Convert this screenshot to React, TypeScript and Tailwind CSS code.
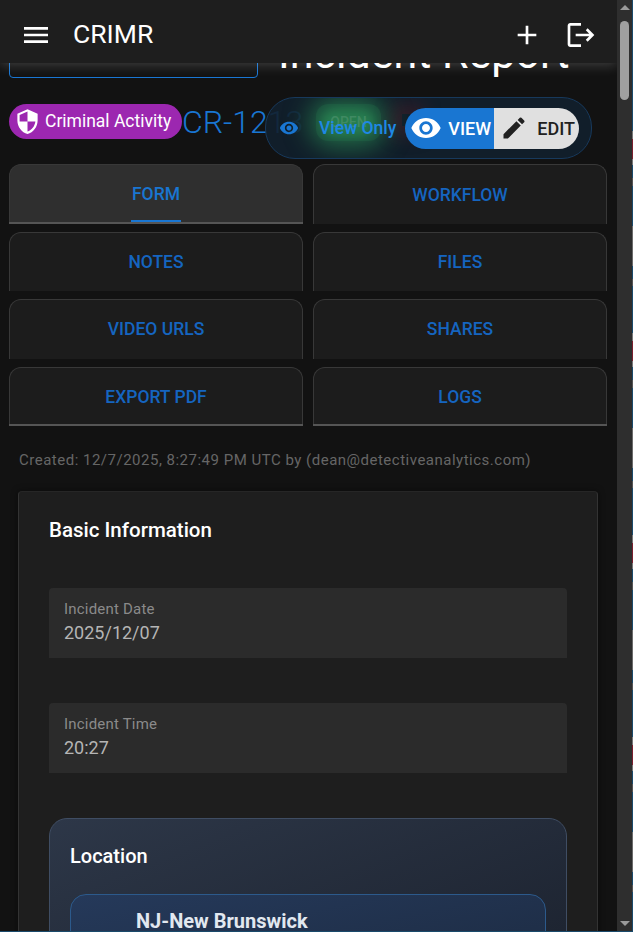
import React from 'react';

const ICONS = {
  menu: 'M3 18h18v-2H3v2zm0-5h18v-2H3v2zm0-7v2h18V6H3z',
  add: 'M19 13h-6v6h-2v-6H5v-2h6V5h2v6h6v2z',
  logout: 'M17 7l-1.41 1.41L18.17 11H8v2h10.17l-2.58 2.58L17 17l5-5zM4 5h8V3H4c-1.1 0-2 .9-2 2v14c0 1.1.9 2 2 2h8v-2H4V5z',
  shield: 'M12 1 3 5v6c0 5.55 3.84 10.74 9 12 5.16-1.26 9-6.45 9-12V5l-9-4zm0 10.99h7c-.53 4.12-3.28 7.79-7 8.94V12H5V6.3l7-3.11v8.8z',
  eye: 'M12 4.5C7 4.5 2.73 7.61 1 12c1.73 4.39 6 7.5 11 7.5s9.27-3.11 11-7.5c-1.73-4.39-6-7.5-11-7.5zM12 17c-2.76 0-5-2.24-5-5s2.24-5 5-5 5 2.24 5 5-2.24 5-5 5zm0-8c-1.66 0-3 1.34-3 3s1.34 3 3 3 3-1.34 3-3-1.34-3-3-3z',
  edit: 'M3 17.25V21h3.75L17.81 9.94l-3.75-3.75L3 17.25zM20.71 7.04c.39-.39.39-1.02 0-1.41l-2.34-2.34a.9959.9959 0 0 0-1.41 0l-1.83 1.83 3.75 3.75 1.83-1.83z',
};

const Icon = ({ name, className }: { name: keyof typeof ICONS; className: string }) => (
  <svg viewBox="0 0 24 24" fill="currentColor" className={className}>
    <path d={ICONS[name]} />
  </svg>
);

const TABS = ['FORM', 'WORKFLOW', 'NOTES', 'FILES', 'VIDEO URLS', 'SHARES', 'EXPORT PDF', 'LOGS'];

// scroll markers of the page behind, one period of the 1px strip at the window edge
const MARKS = [
  { h: 131, c: '#1a4a6b' }, { h: 8, c: '#777777' }, { h: 20, c: '#7a1f2e' }, { h: 6, c: '#777777' },
  { h: 13, c: '#1a4a6b' }, { h: 8, c: '#555555' }, { h: 40, c: '#1a4a6b' }, { h: 40, c: '#6a6a6a' },
  { h: 13, c: '#1a4a6b' }, { h: 7, c: '#555555' }, { h: 47, c: '#1a4a6b' },
];

const Field = ({ label, value }: { label: string; value: string }) => (
  <div className="h-[70px] rounded-t bg-[#2b2b2b] px-[15px] pt-[11px]">
    <div className="text-[15px] leading-[20px] tracking-[0.2px] text-[#8a8a8a]">{label}</div>
    <div className="mt-[2px] text-[18px] leading-[24px] text-[#b5b5b5]">{value}</div>
  </div>
);

export default function App() {
  return (
    <div className="flex h-[932px] w-[633px] overflow-hidden border-b border-[#1a4a6b] bg-[#121212] font-['Roboto',sans-serif]">
      <div className="relative w-[617px] shrink-0 overflow-hidden">
        {/* App bar sits over the scrolled page */}
        <header className="absolute inset-x-0 top-0 z-30 flex h-[63px] items-center bg-[#1e1e1e] pl-[20px] pr-[20px] pt-[6px] text-white shadow-[0_2px_12px_rgba(255,255,255,0.2)]">
          <Icon name="menu" className="size-8" />
          <span className="ml-[21px] text-[26.5px] leading-none">CRIMR</span>
          <div className="ml-auto flex items-center gap-[22px]">
            <Icon name="add" className="size-8" />
            <Icon name="logout" className="size-8" />
          </div>
        </header>

        <div className="px-[9px]">
          <div className="flex h-[78px] items-end">
            <div className="h-[40px] w-[249px] rounded-b border border-[#1976d2]" />
            <h1 className="ml-[20px] pb-[1px] text-[43px] leading-[48px] text-white">Incident Report</h1>
          </div>

          <div className="mt-[26px] flex h-[35px] items-center">
            <div className="flex h-[35px] w-[173px] shrink-0 items-center rounded-full bg-[#9c27b0] pl-[5px] text-white">
              <Icon name="shield" className="size-[27px]" />
              <span className="ml-[4px] text-[17.5px]">Criminal Activity</span>
            </div>
            <span className="text-[32px] font-light leading-none text-[#1976d2]">CR-1213</span>
          </div>

          <div className="mt-[25px] grid grid-cols-2 gap-x-[10px] gap-y-[8px] pr-[1px]">
            {TABS.map((tab, i) => {
              const active = i === 0;
              const lined = active || i >= 6;
              return (
                <div
                  key={tab}
                  className={`relative flex h-[59.5px] items-center justify-center rounded-t-xl border border-b-0 border-[#383838] text-[17.5px] font-medium ${
                    active ? 'bg-[#2f2f2f] text-[#1976d2]' : 'bg-[#1c1c1c] text-[#1565c0]'
                  } ${i === 1 ? 'pt-[1px]' : ''}`}
                >
                  {tab}
                  {lined && <span className="absolute inset-x-[-1px] bottom-0 h-[2px] bg-[#555555]" />}
                  {active && <span className="absolute bottom-[2px] left-1/2 h-[2px] w-[50px] -translate-x-1/2 bg-[#1976d2]" />}
                </div>
              );
            })}
          </div>

          <p className="mt-[24px] pl-[10px] text-[15px] leading-[20px] tracking-[0.5px] text-[#666666]">
            Created: 12/7/2025, 8:27:49 PM UTC by (dean@detectiveanalytics.com)
          </p>
        </div>

        <section className="ml-[18px] mt-[21px] w-[580px] rounded-t border-x border-t border-x-[#333333] border-t-[#262626] bg-[#1e1e1e] px-[30px] pt-[25px] shadow-[0_0_6px_rgba(0,0,0,0.5)]">
          <h2 className="text-[20.5px] font-medium leading-[26px] text-white">Basic Information</h2>
          <div className="mt-[45px] flex flex-col gap-[45px]">
            <Field label="Incident Date" value="2025/12/07" />
            <Field label="Incident Time" value="20:27" />
          </div>
          <div className="mt-[45px] h-[200px] rounded-t-[18px] border border-[#3f4d63] bg-gradient-to-br from-[#2d3748] to-[#1a202c] px-[20px] pt-[24px]">
            <h3 className="text-[20px] font-medium leading-[26px] text-white">Location</h3>
            <div className="mt-[25px] h-[100px] rounded-t-[16px] border border-[#2c5a8c] bg-gradient-to-br from-[#25395a] to-[#1c2a40] pl-[65px] pt-[13px]">
              <div className="text-[20px] font-bold leading-[26px] text-[#e2e8f0]">NJ-New Brunswick</div>
            </div>
          </div>
        </section>

        {/* Floating view/edit toggle, with the status chip glowing underneath */}
        <div className="absolute left-[265px] top-[97px] z-20 flex h-[62px] w-[327px] items-center overflow-hidden rounded-[30px] border border-[#17395c] bg-[#12202e]/90 pl-[13px]">
          <div className="absolute left-[56px] top-[12px] h-[25px] w-[52px] rounded-full bg-[#2a8f55]/80 shadow-[0_0_22px_14px_rgba(42,143,85,0.6)] blur-[5px]" />
          <div className="absolute left-[50px] top-[6px] flex h-[37px] w-[65px] items-center justify-center rounded-xl bg-[#2f9a5c]/15 text-[14px] font-medium text-[#3f8a62]">
            OPEN
          </div>
          <div className="absolute left-[136px] top-[16px] size-[12px] shadow-[0_0_18px_10px_rgba(120,25,40,0.3)]" />
          <Icon name="eye" className="relative size-[20px] text-[#1976d2]" />
          <span className="relative ml-[20px] text-[17.5px] font-medium text-[#1e88e5]">View Only</span>
          <div className="relative ml-[9px] flex h-[41px] w-[174px] overflow-hidden rounded-full text-[18px] font-medium">
            <div className="flex w-[89px] items-center bg-[#1976d2] pl-[5px] text-white">
              <Icon name="eye" className="size-[32px]" />
              <span className="ml-[6px]">VIEW</span>
            </div>
            <div className="flex flex-1 items-center bg-[#e0e0e0] pl-[6px] text-[#212121]">
              <Icon name="edit" className="size-[28px]" />
              <span className="ml-[9px]">EDIT</span>
            </div>
          </div>
        </div>
      </div>

      {/* Browser scrollbar */}
      <div className="flex w-[15px] shrink-0 flex-col items-center bg-[#2e2e2e]">
        <div className="mt-[5px] size-0 border-x-[5px] border-b-[5px] border-x-transparent border-b-[#9a9a9a]" />
        <div className="mt-[11px] h-[79px] w-[9px] rounded-full bg-[#9f9f9f]" />
        <div className="mt-auto mb-[5px] size-0 border-x-[5px] border-t-[5px] border-x-transparent border-t-[#9a9a9a]" />
      </div>

      <div className="w-px shrink-0 bg-[#1a4a6b]">
        {[...MARKS, ...MARKS.slice(1), ...MARKS.slice(1), ...MARKS.slice(1)].map((m, i) => (
          <div key={i} style={{ height: m.h, background: m.c }} />
        ))}
      </div>
    </div>
  );
}
